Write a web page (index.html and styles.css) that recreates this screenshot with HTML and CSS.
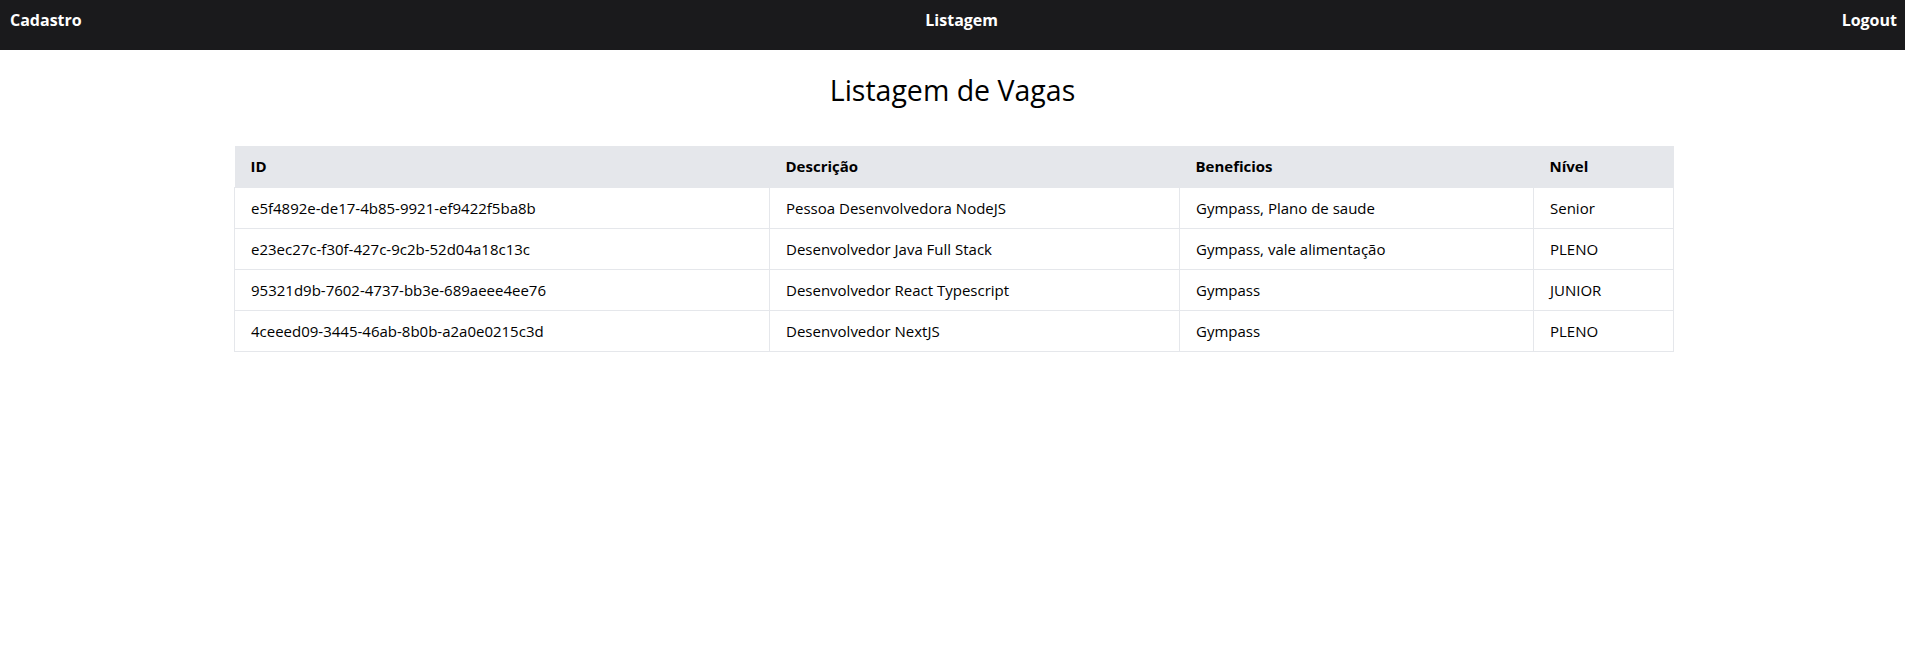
FILE: index.html
```html
<!DOCTYPE html>
<html lang="pt-BR">
<head>
<meta charset="utf-8">
<title>Listagem de Vagas</title>
<link rel="stylesheet" href="styles.css">
</head>
<body>
<nav class="navbar">
  <a class="nav-link" href="#">Cadastro</a>
  <a class="nav-link" href="#">Listagem</a>
  <a class="nav-link" href="#">Logout</a>
</nav>
<main class="content">
  <h1 class="page-title">Listagem de Vagas</h1>
  <table class="jobs">
    <thead>
      <tr>
        <th class="col-id">ID</th>
        <th class="col-desc">Descrição</th>
        <th class="col-ben">Beneficios</th>
        <th class="col-lvl">Nível</th>
      </tr>
    </thead>
    <tbody>
      <tr><td>e5f4892e-de17-4b85-9921-ef9422f5ba8b</td><td>Pessoa Desenvolvedora NodeJS</td><td>Gympass, Plano de saude</td><td>Senior</td></tr>
      <tr><td>e23ec27c-f30f-427c-9c2b-52d04a18c13c</td><td>Desenvolvedor Java Full Stack</td><td>Gympass, vale alimentação</td><td>PLENO</td></tr>
      <tr><td>95321d9b-7602-4737-bb3e-689aeee4ee76</td><td>Desenvolvedor React Typescript</td><td>Gympass</td><td>JUNIOR</td></tr>
      <tr><td>4ceeed09-3445-46ab-8b0b-a2a0e0215c3d</td><td>Desenvolvedor NextJS</td><td>Gympass</td><td>PLENO</td></tr>
    </tbody>
  </table>
</main>
</body>
</html>
```
FILE: styles.css
```css
* { box-sizing: border-box; }
html, body { margin: 0; padding: 0; background: #fff; }
body {
  font-family: "Open Sans", "Noto Sans", sans-serif;
  color: #000;
}
.navbar {
  height: 50px;
  background: #1a1a1c;
  display: flex;
  justify-content: space-between;
  align-items: center;
  padding: 0 8px 10px 10px;
}
.nav-link {
  color: #fff;
  text-decoration: none;
  font-weight: 700;
  font-size: 16px;
}
.content {
  display: flex;
  flex-direction: column;
  align-items: center;
}
.page-title {
  margin: 20px 0 0;
  font-size: 28.5px;
  font-weight: 400;
  line-height: 40px;
}
.jobs {
  margin: 36px 0 0 3px;
  width: 1439px;
  border-collapse: collapse;
  font-size: 15px;
  table-layout: fixed;
}
.jobs th, .jobs td {
  text-align: left;
  padding: 0 16px;
  height: 41px;
}
.jobs th {
  background: #e5e7eb;
  font-weight: 700;
}
.jobs td {
  border: 1px solid #e5e7eb;
}
.col-id { width: 535px; }
.col-desc { width: 410px; }
.col-ben { width: 354px; }
.col-lvl { width: 140px; }
```
